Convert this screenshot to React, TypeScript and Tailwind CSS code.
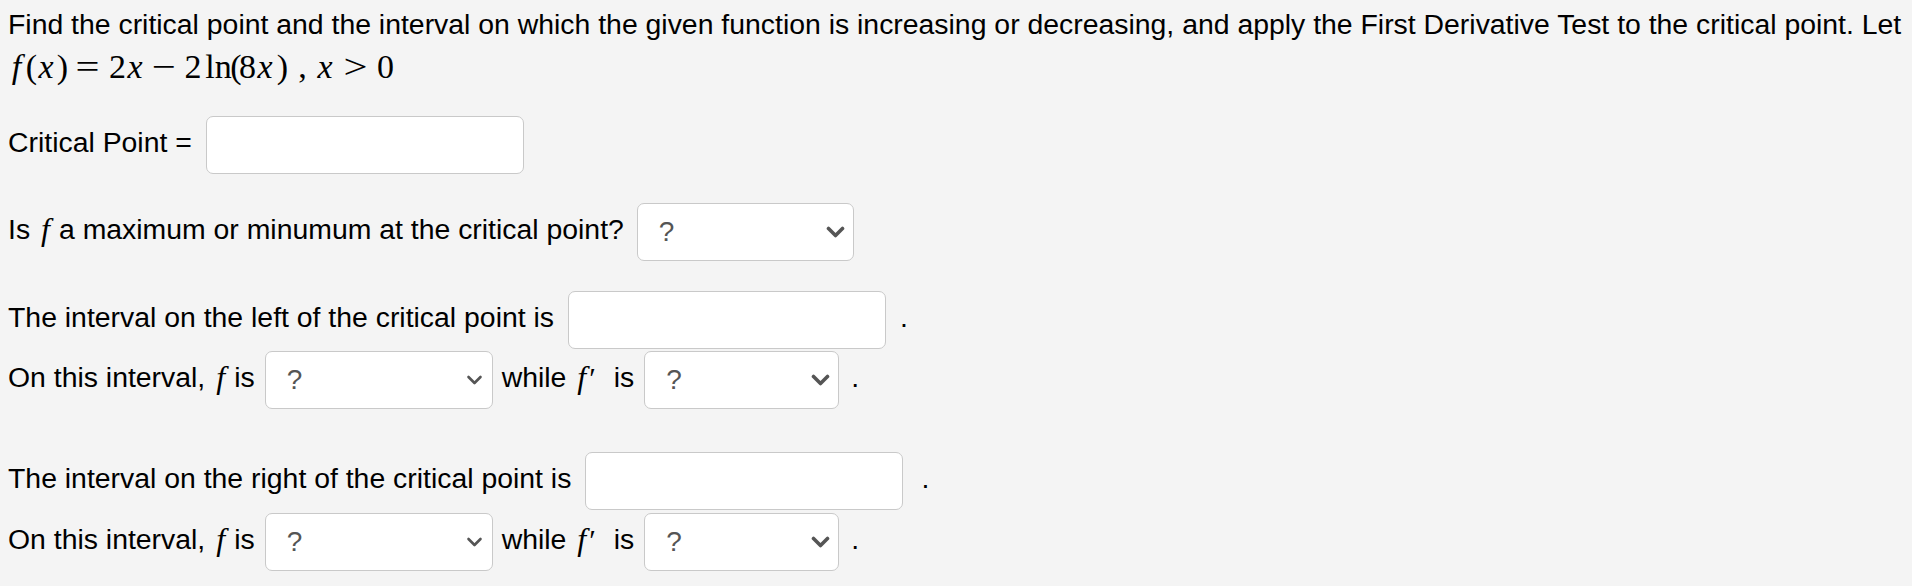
import React from "react";

const sans = "font-['Liberation_Sans',Arial,Helvetica,sans-serif]";
const serif = "font-['Liberation_Serif','Times_New_Roman',serif]";

// italic math f as it appears inline in the sentences
function F({ prime = false }: { prime?: boolean }) {
  return (
    <span className={`${serif} mb-[6px] inline-block text-[32px] leading-none ml-[3px] ${prime ? "mr-[18px]" : "mr-[9px]"}`}>
      <span className="italic">f</span>
      {prime && <span className="ml-[3px] text-[30px]">′</span>}
    </span>
  );
}

// sentence text, lifted a little above the box centre like the original
function T({ children, className = "" }: { children: React.ReactNode; className?: string }) {
  return <span className={`mb-[6px] ${className}`}>{children}</span>;
}

function TextBox({ className = "" }: { className?: string }) {
  return (
    <div
      className={`h-[58px] w-[318px] shrink-0 rounded-[7px] border-[1.5px] border-[#c9c9c9] bg-white ${className}`}
    />
  );
}

function Chevron({ thin = false }: { thin?: boolean }) {
  return (
    <svg width="19" height="12" viewBox="0 0 19 12" className="shrink-0">
      <path
        d={thin ? "M3.5 3 L9.5 9 L15.5 3" : "M2.5 2.5 L9.5 9.5 L16.5 2.5"}
        fill="none"
        stroke="#555"
        strokeWidth={thin ? 2.6 : 3.6}
        strokeLinecap="round"
        strokeLinejoin="round"
      />
    </svg>
  );
}

function Pick({ width, thin = false }: { width: string; thin?: boolean }) {
  return (
    <div
      className={`flex h-[58px] ${width} shrink-0 items-center justify-between rounded-[7px] border-[1.5px] border-[#c9c9c9] bg-white pl-[21px] pr-[8px]`}
    >
      <span className="text-[28px] text-[#555]">?</span>
      <Chevron thin={thin} />
    </div>
  );
}

function Row({ children, className = "" }: { children: React.ReactNode; className?: string }) {
  return <div className={`flex h-[58px] items-center whitespace-nowrap ${className}`}>{children}</div>;
}

// one glyph of the formula, centred in a box as wide as its ink
function G({ children, w, ml, it = false, op = false }: { children: React.ReactNode; w: string; ml: string; it?: boolean; op?: boolean }) {
  return (
    <span className={`flex shrink-0 justify-center ${w} ${ml}`}>
      <span className={`${it ? "italic" : ""} ${op ? "inline-block scale-x-[1.25]" : ""}`}>{children}</span>
    </span>
  );
}

export default function App() {
  return (
    <div className={`min-h-[586px] w-full bg-[#f4f4f4] px-[8px] text-[28.4px] text-black ${sans}`}>
      <div className="flex h-[48px] items-center whitespace-nowrap">
        Find the critical point and the interval on which the given function is increasing or decreasing, and apply
        the First Derivative Test to the critical point. Let
      </div>
      <div className={`flex h-[38px] items-baseline whitespace-nowrap pt-[1px] leading-[36px] ${serif} text-[34px]`}>
        <G w="w-[17px]" ml="ml-0" it>f</G>
        <G w="w-[7px]" ml="ml-[3px]">(</G>
        <G w="w-[18px]" ml="ml-[2px]" it>x</G>
        <G w="w-[9px]" ml="ml-[3px]">)</G>
        <G w="w-[25px]" ml="ml-[8px]" op>=</G>
        <G w="w-[11px]" ml="ml-[12px]">2</G>
        <G w="w-[20px]" ml="ml-[2px]" it>x</G>
        <G w="w-[23px]" ml="ml-[7px]" op>−</G>
        <G w="w-[12px]" ml="ml-[12px]">2</G>
        <G w="w-[25px]" ml="ml-[7px]">ln</G>
        <G w="w-[6px]" ml="ml-[2px]">(</G>
        <G w="w-[13px]" ml="ml-[2px]">8</G>
        <G w="w-[20px]" ml="ml-[1px]" it>x</G>
        <G w="w-[9px]" ml="ml-[3px]">)</G>
        <G w="w-[5px]" ml="ml-[13px]">,</G>
        <G w="w-[20px]" ml="ml-[10px]" it>x</G>
        <G w="w-[21px]" ml="ml-[10px]" op>&gt;</G>
        <G w="w-[13px]" ml="ml-[13px]">0</G>
      </div>

      <Row className="mt-[30px]">
        <T>Critical Point =</T>
        <TextBox className="ml-[14px]" />
      </Row>

      <Row className="mt-[29px]">
        <T>Is</T>
        <span className="ml-[8px]" />
        <F />
        <T>a maximum or minumum at the critical point?</T>
        <div className="ml-[13px]">
          <Pick width="w-[217px]" />
        </div>
      </Row>

      <Row className="mt-[30px]">
        <T>The interval on the left of the critical point is</T>
        <TextBox className="ml-[14px]" />
        <T className="ml-[14px]">.</T>
      </Row>
      <Row className="mt-[2px]">
        <T>On this interval,</T>
        <span className="ml-[8px]" />
        <F />
        <T>is</T>
        <div className="ml-[10px]">
          <Pick width="w-[228px]" thin />
        </div>
        <T className="ml-[9px]">while</T>
        <span className="ml-[8px]" />
        <F prime />
        <T>is</T>
        <div className="ml-[10px]">
          <Pick width="w-[195px]" />
        </div>
        <T className="ml-[12px]">.</T>
      </Row>

      <Row className="mt-[43px]">
        <T>The interval on the right of the critical point is</T>
        <TextBox className="ml-[14px]" />
        <T className="ml-[18px]">.</T>
      </Row>
      <Row className="mt-[3px]">
        <T>On this interval,</T>
        <span className="ml-[8px]" />
        <F />
        <T>is</T>
        <div className="ml-[10px]">
          <Pick width="w-[228px]" thin />
        </div>
        <T className="ml-[9px]">while</T>
        <span className="ml-[8px]" />
        <F prime />
        <T>is</T>
        <div className="ml-[10px]">
          <Pick width="w-[195px]" />
        </div>
        <T className="ml-[12px]">.</T>
      </Row>
    </div>
  );
}
